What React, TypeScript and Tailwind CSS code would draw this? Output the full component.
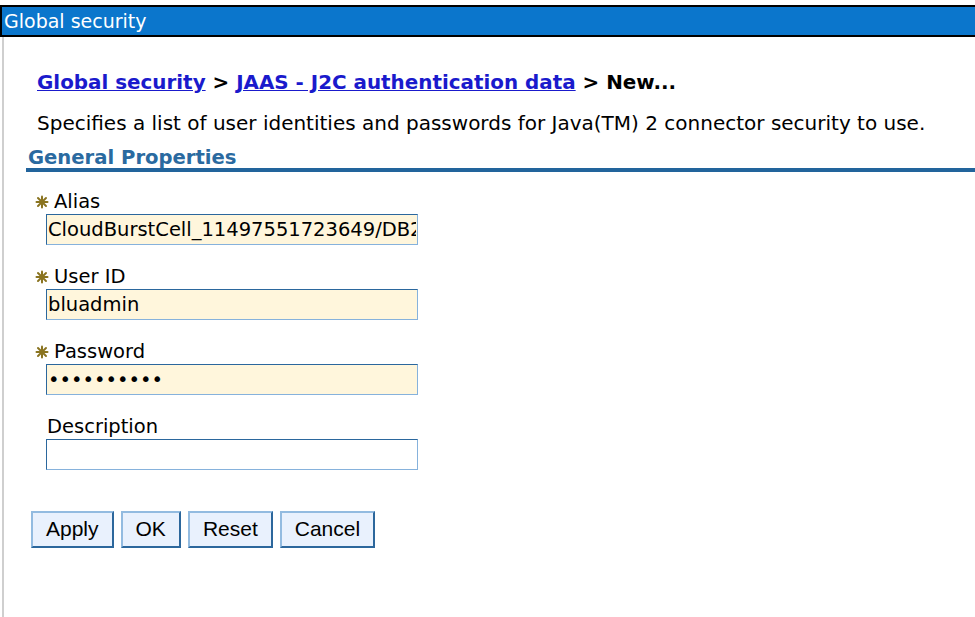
// WebSphere-style "Global security" form

const Req = () => (
  <svg width="14" height="14" viewBox="0 0 14 14" className="shrink-0">
    <g stroke="#8a7420" strokeWidth="2" strokeLinecap="round">
      <line x1="7" y1="1.5" x2="7" y2="12.5" />
      <line x1="1.5" y1="7" x2="12.5" y2="7" />
      <line x1="3" y1="3" x2="11" y2="11" />
      <line x1="11" y1="3" x2="3" y2="11" />
    </g>
    <circle cx="7" cy="7" r="2.4" fill="#8a7420" />
  </svg>
);

type Field = {
  label: string;
  value: string;
  required: boolean;
  type?: string;
};

const fields: Field[] = [
  { label: 'Alias', value: 'CloudBurstCell_11497551723649/DB2user', required: true },
  { label: 'User ID', value: 'bluadmin', required: true },
  { label: 'Password', value: 'passw0rd12', required: true, type: 'password' },
  { label: 'Description', value: '', required: false },
];

const buttons = ['Apply', 'OK', 'Reset', 'Cancel'];

export default function App() {
  return (
    <div className="w-full h-[617px] bg-white overflow-hidden font-['DejaVu_Sans',sans-serif] text-black">
      {/* Title bar */}
      <div className="mt-[5px] h-[32px] bg-[#0b76cc] border-y-2 border-l-2 border-black flex items-center pl-[2px]">
        <span className="text-white text-[19px] leading-none">Global security</span>
      </div>

      <div className="ml-[2px] border-l-2 border-[#cfcfcf] h-full pt-[34px]">
        {/* Breadcrumb */}
        <div className="pl-[33px] text-[19.9px] font-bold leading-[24px]">
          <a href="#" className="text-[#1a1acc] underline">Global security</a>
          <span> &gt; </span>
          <a href="#" className="text-[#1a1acc] underline">JAAS - J2C authentication data</a>
          <span> &gt; New...</span>
        </div>

        <p className="pl-[33px] mt-[16px] text-[20px] leading-[24px]">
          Specifies a list of user identities and passwords for Java(TM) 2 connector security to use.
        </p>

        {/* Section heading */}
        <div className="mt-[12px] ml-[22px] border-b-4 border-[#22649c]">
          <h2 className="pl-[2px] text-[19.6px] font-bold leading-[21px] text-[#2a6aa0]">
            General Properties
          </h2>
        </div>

        {/* Fields */}
        <div className="pl-[31px] mt-[19px] flex flex-col gap-[21px]">
          {fields.map((f) => (
            <div key={f.label} className="flex flex-col">
              <div className={`flex items-center h-[22px] ${f.required ? '' : 'pl-[12px]'}`}>
                {f.required && (
                  <span className="w-[19px] flex items-center">
                    <Req />
                  </span>
                )}
                <span className="text-[19.5px] leading-none">{f.label}</span>
              </div>
              <input
                type={f.type ?? 'text'}
                defaultValue={f.value}
                className={`ml-[11px] mt-[1px] w-[372px] h-[31px] px-[1px] text-[19.5px] outline-none border border-t-[#2b679d] border-l-[#2b679d] border-r-[#86b2dc] border-b-[#86b2dc] font-['DejaVu_Sans',sans-serif] ${
                  f.required ? 'bg-[#fff6dc]' : 'bg-white'
                }`}
              />
            </div>
          ))}
        </div>

        {/* Buttons */}
        <div className="pl-[27px] mt-[41px] flex gap-[7px]">
          {buttons.map((b) => (
            <button
              key={b}
              className="h-[37px] px-[13px] pb-[2px] bg-[#e9f1fd] border-2 border-t-[#93bbe0] border-l-[#93bbe0] border-r-[#2c679c] border-b-[#2c679c] text-[21px] leading-none font-['Liberation_Sans',sans-serif]"
            >
              {b}
            </button>
          ))}
        </div>
      </div>
    </div>
  );
}
